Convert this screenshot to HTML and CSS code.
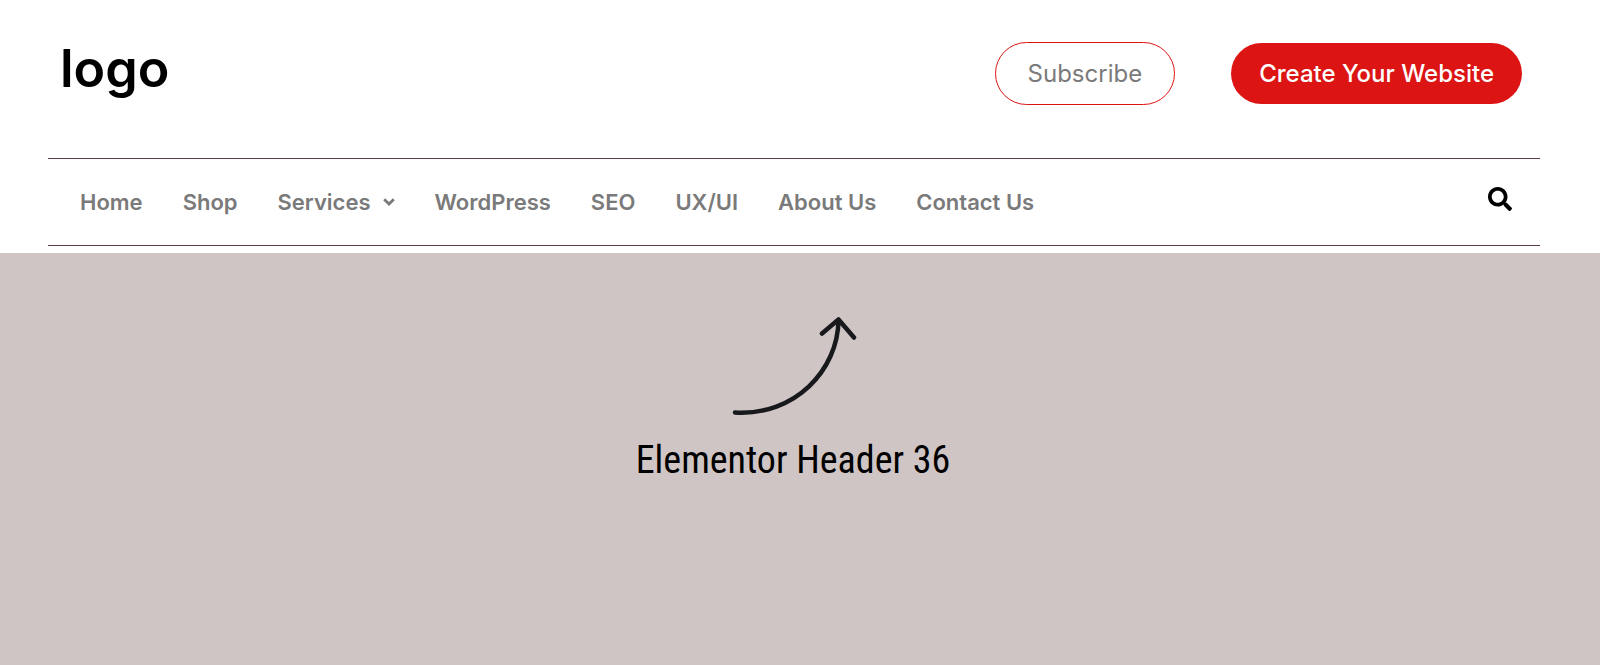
FILE: index.html
```html
<!DOCTYPE html>
<html lang="en">
<head>
<meta charset="utf-8">
<meta name="viewport" content="width=device-width, initial-scale=1">
<title>Elementor Header 36</title>
<link rel="stylesheet" href="styles.css">
</head>
<body>
<header class="header">
  <div class="topbar">
    <a class="logo" href="#">logo</a>
    <div class="actions">
      <button class="btn btn-outline" type="button">Subscribe</button>
      <button class="btn btn-solid" type="button">Create Your Website</button>
    </div>
  </div>
  <div class="navbar">
    <nav class="nav" aria-label="Main">
      <a class="nav-link" href="#">Home</a>
      <a class="nav-link" href="#">Shop</a>
      <a class="nav-link" href="#">Services
        <svg class="chevron" viewBox="0 0 12 8" aria-hidden="true"><path d="M1.200 1.200 6 6l4.800-4.800" fill="none" stroke="currentColor" stroke-width="2.800"/></svg>
      </a>
      <a class="nav-link" href="#">WordPress</a>
      <a class="nav-link" href="#">SEO</a>
      <a class="nav-link" href="#">UX/UI</a>
      <a class="nav-link" href="#">About Us</a>
      <a class="nav-link" href="#">Contact Us</a>
    </nav>
    <button class="search" type="button" aria-label="Search">
      <svg viewBox="0 0 512 512" aria-hidden="true"><path fill="currentColor" d="M505 442.700 405.300 343c-4.500-4.500-10.600-7-17-7H372c27.600-35.300 44-79.700 44-128C416 93.100 322.900 0 208 0S0 93.100 0 208s93.100 208 208 208c48.300 0 92.700-16.400 128-44v16.300c0 6.400 2.500 12.500 7 17l99.700 99.700c9.400 9.400 24.600 9.400 33.900 0l28.300-28.300c9.400-9.400 9.400-24.600.1-34zM208 336c-70.700 0-128-57.200-128-128 0-70.700 57.200-128 128-128 70.700 0 128 57.200 128 128 0 70.700-57.200 128-128 128z"/></svg>
    </button>
  </div>
</header>
<main class="hero">
  <svg class="arrow" viewBox="0 0 124 100" aria-hidden="true"><path d="M4 96.500C64 100 107 54 107.500 4M91 17.500 107.500 3.500l15.500 18" fill="none" stroke="#17191c" stroke-width="4.500" stroke-linecap="round" stroke-linejoin="round"/></svg>
  <h1 class="title">Elementor Header 36</h1>
</main>
</body>
</html>
```
FILE: styles.css
```css
* { box-sizing: border-box; }

body {
  margin: 0;
  min-height: 100vh;
  display: flex;
  flex-direction: column;
  background: #fff;
  font-family: Inter, "Open Sans", sans-serif;
}

.header { padding: 42px 60px 7px 48px; }

.topbar {
  display: flex;
  align-items: flex-start;
  justify-content: space-between;
  padding: 0 18px 53px 12px;
}

.logo {
  color: #000;
  font-size: 52px;
  font-weight: 600;
  line-height: 54px;
  text-decoration: none;
}

.actions {
  display: flex;
  align-items: center;
  gap: 56px;
}

.btn {
  padding: 0 28px;
  border: 0;
  border-radius: 32px;
  font-family: inherit;
  font-size: 24px;
  line-height: 61px;
  white-space: nowrap;
  cursor: pointer;
}

.btn-outline {
  padding: 0 32px;
  border: 1px solid #dc1414;
  background: #fff;
  color: #7a7a7a;
}

.btn-solid {
  background: #dc1414;
  color: #fff;
  font-weight: 500;
}

.navbar {
  display: flex;
  align-items: center;
  justify-content: space-between;
  height: 88px;
  padding: 0 28px 0 32px;
  border: solid #5c3f40;
  border-width: 1px 0;
}

.nav {
  display: flex;
  gap: 40px;
}

.nav-link {
  display: flex;
  align-items: center;
  gap: 12px;
  color: #7a7a7a;
  font-size: 22px;
  font-weight: 600;
  line-height: 32px;
  text-decoration: none;
  white-space: nowrap;
}

.chevron { width: 12px; height: 8px; }

.search {
  padding: 0 0 6px;
  border: 0;
  background: none;
  color: #000;
  cursor: pointer;
}

.search svg {
  display: block;
  width: 24px;
  height: 24px;
}

.hero {
  flex: 1;
  display: flex;
  flex-direction: column;
  align-items: center;
  padding: 63px 14px 0 0;
  background: #cfc5c4;
}

.arrow {
  width: 124px;
  height: 100px;
  overflow: visible;
}

.title {
  margin: 18px 0 0;
  color: #000;
  font-family: "Roboto Condensed", Roboto, sans-serif;
  font-size: 38px;
  font-weight: 400;
  line-height: 52px;
}
```
